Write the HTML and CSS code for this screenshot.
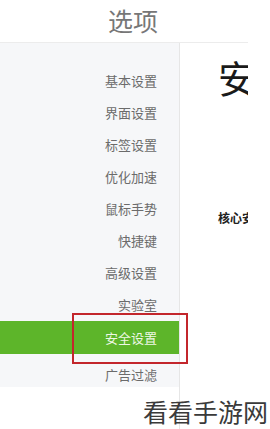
FILE: index.html
```html
<!DOCTYPE html>
<html lang="zh">
<head>
<meta charset="utf-8">
<link rel="stylesheet" href="styles.css">
</head>
<body>
<div class="page">
  <header class="top"><h1 class="title">选项</h1></header>
  <div class="main">
    <nav class="side">
      <ul class="menu">
        <li class="item">基本设置</li>
        <li class="item">界面设置</li>
        <li class="item">标签设置</li>
        <li class="item">优化加速</li>
        <li class="item">鼠标手势</li>
        <li class="item">快捷键</li>
        <li class="item">高级设置</li>
        <li class="item">实验室</li>
        <li class="item active">安全设置</li>
        <li class="item last">广告过滤</li>
      </ul>
    </nav>
    <section class="content">
      <div class="big">安全设置</div>
      <div class="sub">核心安全</div>
    </section>
  </div>
  <div class="highlight"></div>
  <div class="watermark">看看手游网</div>
</div>
</body>
</html>
```
FILE: styles.css
```css
html, body {
  margin: 0;
  padding: 0;
  background: #fff;
}
body {
  width: 270px;
  height: 429px;
  overflow: hidden;
  font-family: "Noto Sans CJK SC", "Noto Sans", sans-serif;
}
.page {
  position: relative;
  width: 270px;
  height: 429px;
}
.top {
  width: 248px;
  height: 43px;
  border-bottom: 1px solid #ececec;
  box-sizing: border-box;
}
.title {
  margin: 0;
  width: 266px;
  text-align: center;
  font-size: 25px;
  font-weight: normal;
  line-height: 40px;
  color: #777;
}
.main {
  display: flex;
  width: 248px;
  height: 386px;
}
.side {
  width: 179px;
  border-right: 1px solid #e6e6e6;
}
.menu {
  list-style: none;
  margin: 0;
  padding: 22px 0 0 0;
  height: 344px;
  box-sizing: border-box;
  background: #f6f7f9;
}
.item {
  height: 32px;
  line-height: 32px;
  text-align: right;
  padding-right: 22px;
  font-size: 13px;
  color: #6b6b6b;
}
.item.active {
  height: 33px;
  line-height: 33px;
  background: #5db52a;
  color: #eef8e4;
}
.item.last {
  margin-top: 5px;
}
.content {
  width: 68px;
  overflow: hidden;
  padding-left: 38px;
  box-sizing: border-box;
  white-space: nowrap;
}
.big {
  font-size: 38px;
  line-height: 40px;
  margin-top: 14px;
  color: #1a1a1a;
}
.sub {
  margin-top: 112px;
  font-size: 12px;
  font-weight: bold;
  color: #222;
}
.highlight {
  position: absolute;
  left: 72px;
  top: 313px;
  width: 116px;
  height: 51px;
  box-sizing: border-box;
  border: 2px solid #c3262c;
}
.watermark {
  position: absolute;
  right: 2px;
  bottom: 2px;
  font-size: 25px;
  line-height: 32px;
  color: #3a3a3a;
  padding-left: 4px;
}
```
